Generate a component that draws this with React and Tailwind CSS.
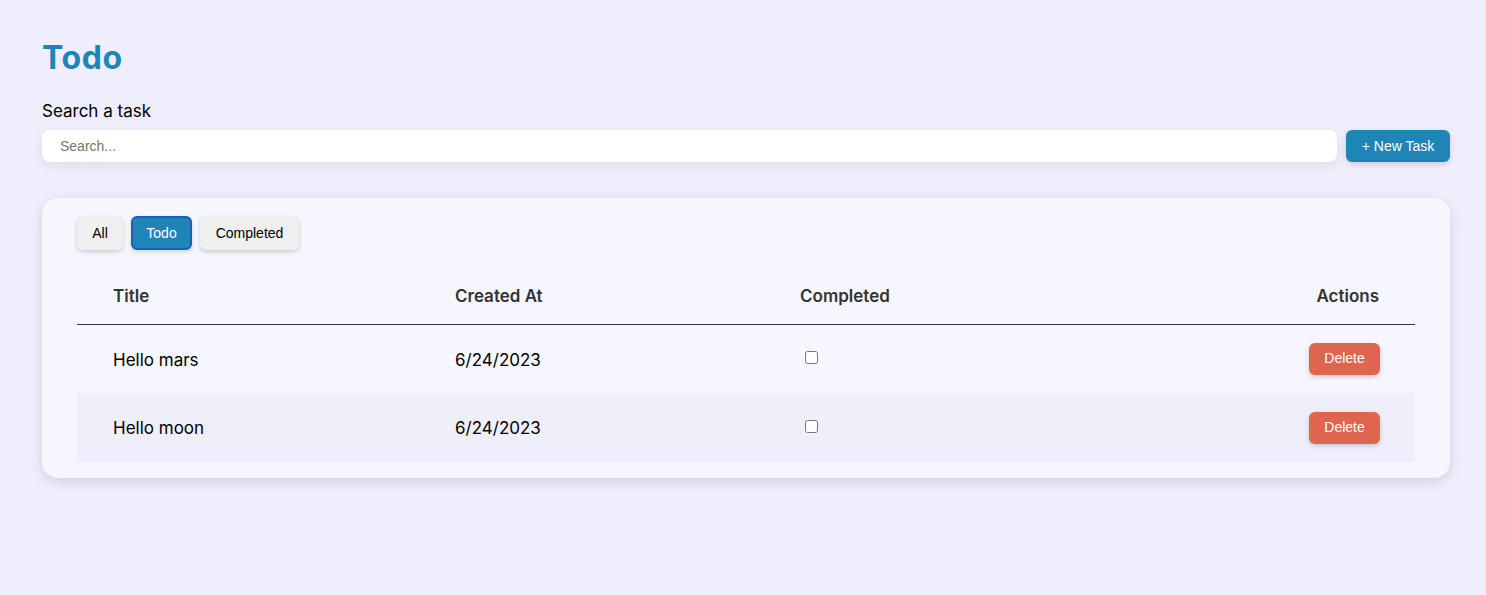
import React, { useState } from 'react';

const tasks = [
  { id: 1, title: 'Hello mars', createdAt: '6/24/2023', completed: false },
  { id: 2, title: 'Hello moon', createdAt: '6/24/2023', completed: false },
];

const App = () => {
  const [filter, setFilter] = useState('todo');
  const [search, setSearch] = useState('');

  const filters = [
    { key: 'all', label: 'All', w: 'w-[46px]' },
    { key: 'todo', label: 'Todo', w: 'w-[61px]' },
    { key: 'completed', label: 'Completed', w: 'w-[99px]' },
  ];

  return (
    <div className="min-h-[595px] bg-[#eeeefc] pl-[42px] pr-[36px] pt-[36px] font-['Inter',sans-serif] text-black">
      <h1 className="text-[32px] font-bold leading-[44px] tracking-[0.6px] text-[#1f84b8]">Todo</h1>

      <label className="mt-[20px] block text-[17px] leading-[22px]">Search a task</label>
      <div className="mt-[8px] flex gap-[9px]">
        <input
          type="text"
          placeholder="Search..."
          value={search}
          onChange={e => setSearch(e.target.value)}
          className="h-[32px] flex-1 rounded-[8px] bg-white pl-[18px] font-['Liberation_Sans',Arial,sans-serif] text-[14px] shadow-[0_4px_12px_rgba(0,0,0,0.08)] outline-none placeholder:text-[#757575]"
        />
        <button className="h-[32px] w-[104px] rounded-[6px] bg-[#1f84b8] font-['Liberation_Sans',Arial,sans-serif] text-[14px] text-white shadow-[0_2px_6px_rgba(0,0,0,0.15)]">
          + New Task
        </button>
      </div>

      <div className="mt-[36px] rounded-[16px] bg-[#f6f6fe] px-[35px] pb-[16px] pt-[18px] shadow-[0_4px_14px_rgba(0,0,0,0.12)]">
        <div className="flex gap-[8px] pl-[-1px]">
          {filters.map(f => (
            <button
              key={f.key}
              onClick={() => setFilter(f.key)}
              className={
                filter === f.key
                  ? `${f.w} h-[34px] rounded-[6px] border-2 border-[#1a5ec2] bg-[#1f84b8] font-['Liberation_Sans',Arial,sans-serif] text-[14px] text-white shadow-[0_2px_4px_rgba(0,0,0,0.15)]`
                  : `${f.w} h-[34px] rounded-[6px] bg-[#efefef] font-['Liberation_Sans',Arial,sans-serif] text-[14px] text-black shadow-[0_2px_4px_rgba(0,0,0,0.18)]`
              }
            >
              {f.label}
            </button>
          ))}
        </div>

        <table className="mt-[20px] w-full border-collapse text-[17px]">
          <thead>
            <tr className="h-[54px] border-b border-[#333340]">
              <th className="w-[342px] px-[36px] text-left font-semibold text-[#333]">Title</th>
              <th className="w-[345px] px-[36px] text-left font-semibold text-[#333]">Created At</th>
              <th className="px-[36px] text-left font-semibold text-[#333]">Completed</th>
              <th className="px-[36px] text-right font-semibold text-[#333]">Actions</th>
            </tr>
          </thead>
          <tbody>
            {tasks.map((task, i) => (
              <tr key={task.id} className={i % 2 === 1 ? 'h-[69px] bg-[#efeffc]' : 'h-[69px]'}>
                <td className="px-[36px] pt-[3px]">{task.title}</td>
                <td className="px-[36px] pt-[3px]">{task.createdAt}</td>
                <td className="px-[36px]">
                  <input type="checkbox" defaultChecked={task.completed} className="ml-[5px] mt-[-2px] block h-[13px] w-[13px]" />
                </td>
                <td className="px-[35px] text-right">
                  <button className="h-[32px] w-[71px] rounded-[6px] bg-[#e06550] font-['Liberation_Sans',Arial,sans-serif] text-[14px] text-white shadow-[0_2px_5px_rgba(0,0,0,0.18)]">
                    Delete
                  </button>
                </td>
              </tr>
            ))}
          </tbody>
        </table>
      </div>
    </div>
  );
};

export default App;
